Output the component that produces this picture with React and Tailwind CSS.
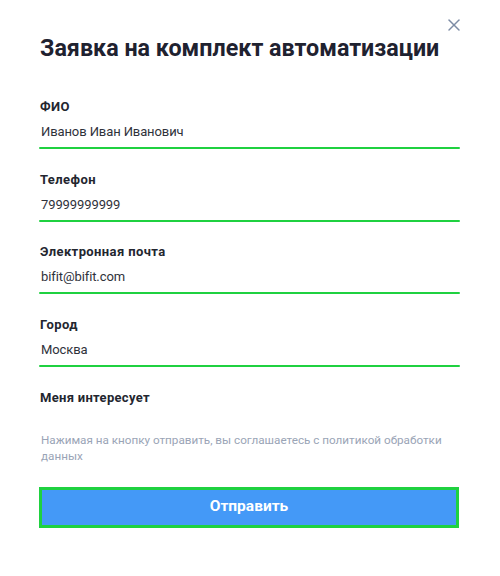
import { X } from 'lucide-react'

const fields = [
  { label: 'ФИО', value: 'Иванов Иван Иванович' },
  { label: 'Телефон', value: '79999999999' },
  { label: 'Электронная почта', value: 'bifit@bifit.com' },
  { label: 'Город', value: 'Москва' },
]

function Field({ label, value }) {
  return (
    <div className="flex flex-col">
      <span className="text-[13px] leading-4 font-bold tracking-[0.4px] text-[#23262f]">{label}</span>
      <span className="mt-[7px] pl-px text-[13px] leading-5 tracking-[-0.1px] text-[#2f323b]">{value}</span>
      <div className="mt-[5px] -ml-px h-[2px] w-[421px] rounded-full bg-[#1fd140]" />
    </div>
  )
}

export default function App() {
  return (
    <div
      className="relative w-[500px] h-[576px] bg-white px-10 pt-8"
      style={{ fontFamily: 'Roboto, "Liberation Sans", sans-serif' }}
    >
      <button className="absolute top-[15px] right-[36px] text-[#7d8ca5]">
        <X size={20} strokeWidth={1.8} />
      </button>

      <h1 className="text-[23.3px] leading-8 font-bold text-[#1f2230]">
        Заявка на комплект автоматизации
      </h1>

      <div className="mt-[35px] flex flex-col gap-[22.5px]">
        {fields.map(f => (
          <Field key={f.label} {...f} />
        ))}
      </div>

      <div className="mt-[23px] text-[13px] leading-4 font-bold tracking-[0.3px] text-[#23262f]">Меня интересует</div>

      <p className="mt-[26px] pl-px text-[11.7px] leading-4 text-[#9aa4b6]">
        Нажимая на кнопку отправить, вы соглашаетесь с политикой обработки данных
      </p>

      <button className="mt-[23px] -ml-px w-[420px] h-[41px] border-[3px] border-[#1fd140] bg-[#4499f7] text-white text-[15.5px] font-bold">
        Отправить
      </button>
    </div>
  )
}
